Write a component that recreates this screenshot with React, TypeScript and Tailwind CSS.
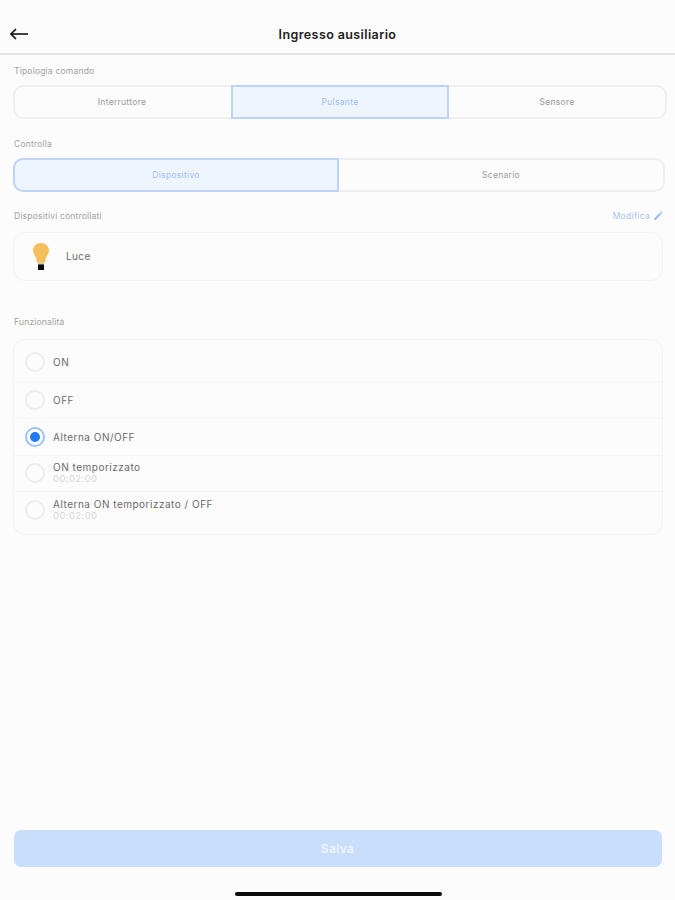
import React from 'react';

const font = { fontFamily: 'Inter, sans-serif' };

function SectionLabel({ text }: { text: string }) {
  return <p className="ml-[1px] text-[8.5px] leading-[12px] tracking-[0.2px] text-[#a0a0a0]">{text}</p>;
}

function Segment({ label, active, className }: { label: string; active?: boolean; className: string }) {
  return (
    <div
      className={`${className} -my-[2px] flex items-center justify-center text-[8.5px] tracking-[0.3px] ${
        active
          ? 'border-2 border-[#bdd3f8] bg-[#eff5ff] text-[#9cbdf6]'
          : 'text-[#999999]'
      }`}
    >
      {label}
    </div>
  );
}

function Radio({ checked }: { checked?: boolean }) {
  if (checked) {
    return (
      <div className="flex h-[20px] w-[20px] shrink-0 items-center justify-center rounded-full border-2 border-[#9cc2f9] bg-white">
        <div className="h-[10px] w-[10px] rounded-full bg-[#1f7cf2]" />
      </div>
    );
  }
  return <div className="h-[20px] w-[20px] shrink-0 rounded-full border-2 border-[#ececec]" />;
}

function OptionRow({ label, sub, checked, className }: { label: string; sub?: string; checked?: boolean; className: string }) {
  return (
    <div className={`${className} flex items-center gap-[8px] border-b border-[#f5f5f5] pl-[11px] last:border-b-0`}>
      <Radio checked={checked} />
      <div>
        <p className="text-[10px] leading-[12px] tracking-[0.5px] text-[#6a6a6a]">{label}</p>
        {sub && <p className="text-[9.5px] leading-[12px] tracking-[0.4px] text-[#d6d6d6]">{sub}</p>}
      </div>
    </div>
  );
}

export default function App() {
  return (
    <div className="flex h-[900px] w-[675px] flex-col overflow-hidden bg-[#fcfcfc]" style={font}>
      <header className="relative flex h-[55px] shrink-0 items-end justify-center border-b-2 border-[#e2e2e2] pb-[11px]">
        <svg className="absolute left-[10px] top-[28px]" width="18" height="12" viewBox="0 0 18 12" fill="none" stroke="#111" strokeWidth="1.6">
          <path d="M18 6H1" />
          <path d="M6 1L1 6l5 5" />
        </svg>
        <h1 className="text-[12.5px] font-semibold leading-[14px] tracking-[0.4px] text-[#222]">Ingresso ausiliario</h1>
      </header>

      <main className="flex flex-1 flex-col pl-[13px]">
        <div className="mt-[10px]">
          <SectionLabel text="Tipologia comando" />
        </div>
        <div className="mt-[8px] flex h-[34px] w-[654px] rounded-[10px] border-2 border-[#efefef]">
          <Segment label="Interruttore" className="w-[218px] -ml-[2px]" />
          <Segment label="Pulsante" className="w-[218px]" active />
          <Segment label="Sensore" className="flex-1" />
        </div>

        <div className="mt-[19px]">
          <SectionLabel text="Controlla" />
        </div>
        <div className="mt-[8px] flex h-[34px] w-[652px] rounded-[10px] border-2 border-[#efefef]">
          <Segment label="Dispositivo" className="w-[326px] -ml-[2px] rounded-l-[10px]" active />
          <Segment label="Scenario" className="flex-1" />
        </div>

        <div className="mt-[18px] flex w-[650px] items-center justify-between">
          <SectionLabel text="Dispositivi controllati" />
          <div className="flex items-center gap-[3px] text-[8.5px] leading-[12px] tracking-[0.3px] text-[#a6c3f5]">
            Modifica
            <svg width="10" height="10" viewBox="0 0 10 10" fill="#9dbdf4">
              <path d="M1 7.4L6.6 1.8l1.6 1.6L2.6 9H1z" />
              <path d="M7.2 1.2l.6-.6a.6.6 0 0 1 .8 0l.8.8a.6.6 0 0 1 0 .8l-.6.6z" />
            </svg>
          </div>
        </div>
        <div className="mt-[10px] flex h-[49px] w-[650px] items-center rounded-[12px] border border-[#f3f3f3]">
          <svg className="ml-[19px]" width="16" height="28" viewBox="0 0 16 28">
            <path d="M8 0c4.4 0 8 3.2 8 7.4 0 3-1.8 4.6-2.8 7-.6 1.4-.9 3-1.1 5H3.900c-.2-2-.5-3.600-1.100-5C1.800 12 0 10.400 0 7.400 0 3.200 3.600 0 8 0z" fill="#f6bf5c" />
            <rect x="4.800" y="19.400" width="6.400" height="2" fill="#d9c9a0" />
            <rect x="5" y="21.400" width="6" height="5.600" fill="#0c0c0c" />
          </svg>
          <span className="ml-[17px] text-[10px] tracking-[0.4px] text-[#6a6a6a]">Luce</span>
        </div>

        <div className="mt-[35px]">
          <SectionLabel text="Funzionalità" />
        </div>
        <div className="mt-[11px] flex h-[196px] w-[650px] flex-col rounded-[12px] border border-[#f3f3f3]">
          <OptionRow label="ON" className="h-[42px] pt-[2px]" />
          <OptionRow label="OFF" className="h-[37px] pb-[1px]" />
          <OptionRow label="Alterna ON/OFF" className="h-[37px] pb-[1px]" checked />
          <OptionRow label="ON temporizzato" sub="00:02:00" className="h-[36px] pb-[1px]" />
          <OptionRow label="Alterna ON temporizzato / OFF" sub="00:02:00" className="h-[42px] pb-[7px]" />
        </div>
      </main>

      <footer className="flex shrink-0 flex-col items-center">
        <button type="button" className="h-[37px] w-[648px] rounded-[7px] bg-[#c9defb] text-[12px] font-semibold tracking-[0.3px] text-[#eef4fe]">
          Salva
        </button>
        <div className="mb-[4px] ml-[1px] mt-[25px] h-[4px] w-[207px] rounded-full bg-[#0a0a0a]" />
      </footer>
    </div>
  );
}
